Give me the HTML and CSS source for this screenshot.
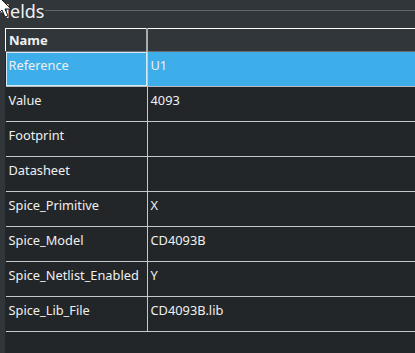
FILE: index.html
```html
<!DOCTYPE html>
<html>
<head>
<meta charset="utf-8">
<link rel="stylesheet" href="styles.css">
</head>
<body>
<div class="group">
  <div class="legend">
    <span class="legend-text">Fields</span>
    <span class="legend-line"></span>
  </div>
  <div class="table-wrap">
    <table class="fields">
      <thead>
        <tr><th class="c1">Name</th><th class="c2"></th></tr>
      </thead>
      <tbody>
        <tr class="sel"><td class="c1 focus">Reference</td><td class="c2">U1</td></tr>
        <tr><td class="c1">Value</td><td class="c2">4093</td></tr>
        <tr><td class="c1">Footprint</td><td class="c2"></td></tr>
        <tr><td class="c1">Datasheet</td><td class="c2"></td></tr>
        <tr><td class="c1">Spice_Primitive</td><td class="c2">X</td></tr>
        <tr><td class="c1">Spice_Model</td><td class="c2">CD4093B</td></tr>
        <tr><td class="c1">Spice_Netlist_Enabled</td><td class="c2">Y</td></tr>
        <tr><td class="c1">Spice_Lib_File</td><td class="c2">CD4093B.lib</td></tr>
      </tbody>
    </table>
  </div>
</div>
<svg class="cursor" width="16" height="18" viewBox="0 0 16 18">
  <path d="M-4 -6 L11 9 L5 9 L8 16 L5 17 L2 10 L-2 14 Z" fill="#ffffff" stroke="#1b1e20" stroke-width="1"/>
</svg>
</body>
</html>
```
FILE: styles.css
```css
html, body {
  margin: 0;
  padding: 0;
  background: #31363b;
  width: 415px;
  height: 353px;
  overflow: hidden;
  font-family: "Noto Sans", "Open Sans", sans-serif;
  color: #eff0f1;
}
.group {
  display: flex;
  flex-direction: column;
  height: 353px;
}
.legend {
  display: flex;
  align-items: flex-start;
  height: 28px;
}
.legend-text {
  font-size: 18px;
  margin-left: -4px;
  line-height: 22px;
  margin-top: 0;
}
.legend-line {
  flex: 1;
  height: 1px;
  background: #61666b;
  margin-left: 1px;
  margin-top: 10px;
}
.table-wrap {
  flex: 1;
  margin-left: 5px;
  background: #232629;
}
.fields {
  border-collapse: collapse;
  width: 420px;
  font-size: 12.8px;
  table-layout: fixed;
}
.fields th, .fields td {
  padding: 0 0 0 3px;
  text-align: left;
  vertical-align: top;
  white-space: nowrap;
  overflow: hidden;
}
.fields .c1 { width: 137px; }
.fields thead th {
  background: #31363b;
  border-top: 1px solid #ffffff;
  border-bottom: 1px solid #6a6e72;
  height: 22px;
  line-height: 22px;
  font-size: 13px;
  font-weight: bold;
  padding-top: 0;
}
.fields thead th.c1 {
  border-left: 1px solid #ffffff;
  border-right: 2px solid #a9abad;
}
.fields tbody td {
  height: 35px;
  line-height: 18px;
  padding-top: 4px;
  box-sizing: border-box;
  border-bottom: 1px solid #c8c8c8;
}
.fields tbody td.c1 {
  border-right: 1px solid #c8c8c8;
}
.fields tbody tr.sel td {
  background: #3daee9;
  border-bottom: 1px solid #b8bbbe;
}
.fields tbody td.focus {
  box-shadow: inset 0 0 0 1px #d5e9f5;
}
.cursor {
  position: absolute;
  left: 0;
  top: 0;
}
```
